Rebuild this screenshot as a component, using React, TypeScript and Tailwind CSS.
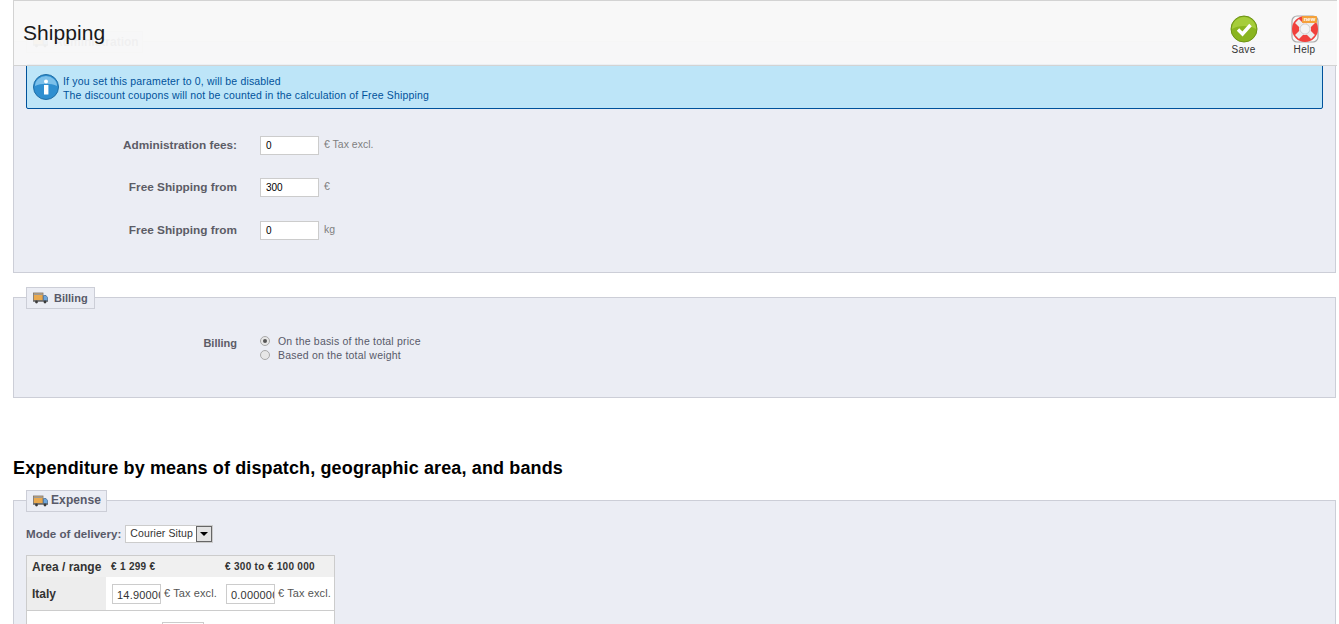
import React from "react";

const Truck = () => (
  <svg width="15" height="12" viewBox="0 0 15 12" className="shrink-0">
    <rect x="0.5" y="1" width="9.5" height="7.5" fill="#e9a94f" stroke="#77706a" strokeWidth="0.8" />
    <rect x="1" y="1.5" width="8.5" height="1.5" fill="#9b9a98" />
    <path d="M10.5 3.5h2.5l1.5 2V9h-4z" fill="#6ea6dc" stroke="#44688f" strokeWidth="0.7" />
    <rect x="0" y="8.5" width="15" height="1.2" fill="#5a5a5a" />
    <circle cx="3.5" cy="10" r="1.4" fill="#3a3a3a" />
    <circle cx="12" cy="10" r="1.4" fill="#3a3a3a" />
  </svg>
);

const Legend = ({ title, w, text }: { title: string; w: string; text: string }) => (
  <div className={`absolute left-[12px] top-[-11px] h-[22px] ${w} flex items-center pl-[6px] bg-[#ebedf4] border border-[#ccced7] font-bold text-[#585a69]`}>
    <Truck />
    <span className={text}>{title}</span>
  </div>
);

const FeeRow = ({ label, value, unit, mb }: { label: string; value: string; unit: string; mb: string }) => (
  <div className={`flex items-center ${mb}`}>
    <div className="w-[223px] text-right text-[11.8px] font-bold text-[#5c5c66]">{label}</div>
    <div className="ml-[23px] w-[59px] h-[19px] bg-white border border-[#ccc] pl-[5px] text-[10px] leading-[18px] text-black">{value}</div>
    <div className="ml-[5px] mb-[1px] text-[10.5px] text-[#7f7f7f]">{unit}</div>
  </div>
);

const Radio = ({ checked }: { checked?: boolean }) => (
  <div className="w-[10px] h-[10px] rounded-full border border-[#a9a9a9] bg-[#e6e6e6] flex items-center justify-center">
    {checked && <div className="w-[4px] h-[4px] rounded-full bg-[#555]" />}
  </div>
);

const PriceCell = ({ value }: { value: string }) => (
  <div className="flex items-center">
    <div className="w-[49px] h-[20px] bg-white border border-[#ccc] pl-[4px] text-[11px] tracking-[0.2px] leading-[20px] text-[#333] overflow-hidden whitespace-nowrap">{value}</div>
    <span className="ml-[3px] text-[11px] tracking-[0.1px] text-[#555]">€ Tax excl.</span>
  </div>
);

export default function App() {
  return (
    <div className="relative h-[624px] w-[1339px] overflow-hidden bg-white font-['Liberation_Sans',Arial,sans-serif]">
      {/* toolbar lies over the page */}
      <div className="absolute left-[13px] top-0 z-10 w-[1324px] h-[66px] flex items-start justify-between bg-[#f8f8f8]/95 border-l border-t border-b border-[#d3d3d3]">
        <div className="ml-[9px] mt-[19px] text-[21px] tracking-[0.05px] leading-[26px] text-[#1a1a1a]">Shipping</div>
        <div className="flex">
          <div className="w-[61px] flex flex-col items-center pt-[14px]">
            <svg width="28" height="28" viewBox="0 0 28 28">
              <circle cx="14" cy="14" r="13" fill="#8ab51f" stroke="#6d9314" strokeWidth="1" />
              <path d="M2 14a12 12 0 0 1 24 0c-6-4-18-4-24 0z" fill="#a6cd3a" />
              <path d="M8 14.5l4.5 4.5L20.5 10" fill="none" stroke="#fff" strokeWidth="3.4" />
            </svg>
            <span className="mt-[-1px] text-[10px] tracking-[0.3px] text-[#333]">Save</span>
          </div>
          <div className="relative w-[61px] mr-[2px] flex flex-col items-center pt-[14px]">
            <svg width="28" height="28" viewBox="0 0 28 28">
              <rect x="1" y="1" width="26" height="26" rx="5" fill="none" stroke="#aaa" strokeWidth="1.2" />
              <circle cx="14" cy="14" r="9.5" fill="none" stroke="#f1413c" strokeWidth="7" />
              <path d="M6 6l5 5M22 6l-5 5M6 22l5-5M22 22l-5-5" stroke="#ececec" strokeWidth="5.5" />
              <circle cx="14" cy="14" r="5" fill="#f4f4f4" stroke="#bbb" strokeWidth="0.6" />
            </svg>
            <div className="absolute left-[28px] top-[15px] h-[7px] w-[15px] rounded-[1px] bg-[#f4a13a] text-center text-[6px] font-bold leading-[7px] text-white">new</div>
            <span className="mt-[-1px] text-[10px] tracking-[0.3px] text-[#333]">Help</span>
          </div>
        </div>
      </div>

      <div className="ml-[13px] mr-[3px] pt-[41px]">
        {/* Administration */}
        <div className="relative h-[232px] bg-[#ebedf4] border border-[#ccced7]">
          <Legend title="Administration" w="w-[117px]" text="ml-[6px] text-[12px]" />
          <div className="ml-[12px] mr-[12px] mt-[22px] h-[45px] flex items-center gap-[4px] pl-[6px] pt-[2px] bg-[#bde5f8] border border-[#00529b] rounded-[2px]">
            <svg width="26" height="26" viewBox="0 0 26 26" className="shrink-0 mt-[-2px]">
              <circle cx="13" cy="13" r="12.5" fill="#2f8fd0" stroke="#1f6da5" />
              <path d="M2 12a11 10 0 0 1 22 0c-6-3-16-3-22 0z" fill="#7cc0ea" />
              <circle cx="13" cy="7.5" r="2" fill="#fff" />
              <rect x="11" y="11" width="4.4" height="9.5" fill="#fff" />
            </svg>
            <div className="text-[10.5px] leading-[14px] tracking-[0.16px] text-[#00529b]">
              <div>If you set this parameter to 0, will be disabled</div>
              <div>The discount coupons will not be counted in the calculation of Free Shipping</div>
            </div>
          </div>
          <div className="mt-[27px]">
            <FeeRow label="Administration fees:" value="0" unit="€ Tax excl." mb="mb-[23px]" />
            <FeeRow label="Free Shipping from" value="300" unit="€" mb="mb-[24px]" />
            <FeeRow label="Free Shipping from" value="0" unit="kg" mb="" />
          </div>
        </div>

        {/* Billing */}
        <div className="relative mt-[24px] h-[101px] bg-[#ebedf4] border border-[#ccced7]">
          <Legend title="Billing" w="w-[69px]" text="ml-[6px] text-[11px]" />
          <div className="flex pt-[36px]">
            <div className="w-[223px] text-right text-[11px] leading-[18px] font-bold text-[#5c5c66]">Billing</div>
            <div className="ml-[23px] text-[10.5px] leading-[14px] tracking-[0.2px] text-[#585a69]">
              <div className="flex items-center gap-[8px]"><Radio checked /><span>On the basis of the total price</span></div>
              <div className="flex items-center gap-[8px]"><Radio /><span>Based on the total weight</span></div>
            </div>
          </div>
        </div>

        <h2 className="mt-[60px] text-[18px] tracking-[0.13px] leading-[20px] font-bold text-black">Expenditure by means of dispatch, geographic area, and bands</h2>

        {/* Expense */}
        <div className="relative mt-[22px] h-[200px] bg-[#ebedf4] border border-[#ccced7]">
          <Legend title="Expense" w="w-[81px]" text="ml-[3px] mb-[2px] text-[12px] tracking-[0.1px]" />
          <div className="flex items-center pl-[12px] pt-[24px]">
            <span className="text-[11.6px] font-bold text-[#585a69]">Mode of delivery:</span>
            <div className="ml-[4px] h-[18px] w-[88px] flex items-center justify-between bg-white border border-[#ccc] pl-[4px] text-[10.5px] tracking-[0.1px] text-[#333]">
              <span>Courier Situp</span>
              <div className="h-[16px] w-[16px] flex items-center justify-center bg-[#e3e3e3] border border-[#666]">
                <div className="border-x-[4px] border-t-[4px] border-x-transparent border-t-black" />
              </div>
            </div>
          </div>
          <div className="ml-[12px] mt-[12px] w-[309px] border border-[#ccc] bg-white">
            <div className="h-[21px] flex items-center bg-[#f0f0f0] text-[#333]">
              <div className="w-[79px] pl-[5px] text-[12px] font-bold">Area / range</div>
              <div className="ml-[5px] w-[114px] text-[10px] font-bold tracking-[0.3px]">€ 1 299 €</div>
              <div className="text-[10px] font-bold tracking-[0.3px]">€ 300 to € 100 000</div>
            </div>
            <div className="h-[34px] flex items-center border-b border-[#ccc]">
              <div className="h-full w-[79px] flex items-center bg-[#ededed] pl-[5px] text-[12px] font-bold text-[#333]">Italy</div>
              <div className="ml-[6px] w-[114px]"><PriceCell value="14.90000" /></div>
              <PriceCell value="0.000000" />
            </div>
            <div className="h-[40px] flex items-start pt-[11px] pl-[135px]">
              <div className="w-[42px] h-[20px] bg-white border border-[#ccc]" />
            </div>
          </div>
        </div>
      </div>
    </div>
  );
}
